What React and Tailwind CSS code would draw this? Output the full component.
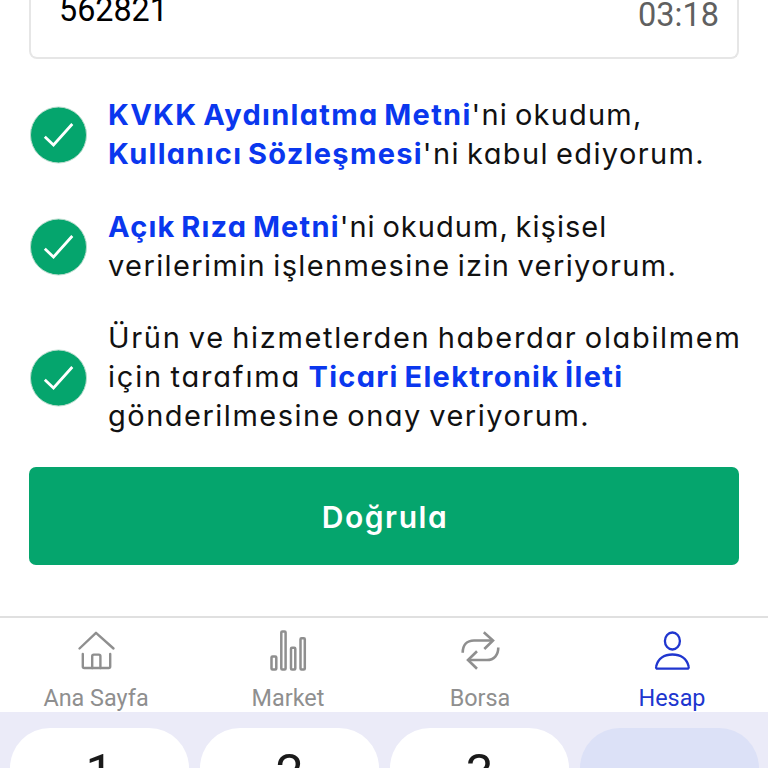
const consents = [
  [
    [
      { text: 'KVKK Aydınlatma Metni', link: true, className: 'tracking-[1.3px]' },
      { text: "'ni okudum,", className: 'tracking-[1.2px]' },
    ],
    [
      { text: 'Kullanıcı Sözleşmesi', link: true, className: 'tracking-[1.28px]' },
      { text: "'ni kabul ediyorum.", className: 'tracking-[1.38px]' },
    ],
  ],
  [
    [
      { text: 'Açık Rıza Metni', link: true, className: 'tracking-[1.2px]' },
      { text: "'ni okudum, kişisel", className: 'tracking-[1.03px]' },
    ],
    [{ text: 'verilerimin işlenmesine izin veriyorum.', className: 'tracking-[1.38px]' }],
  ],
  [
    [{ text: 'Ürün ve hizmetlerden haberdar olabilmem', className: 'tracking-[1.66px]' }],
    [
      { text: 'için tarafıma ', className: 'tracking-[1.8px]' },
      { text: 'Ticari Elektronik İleti', link: true, className: 'tracking-[1.3px]' },
    ],
    [{ text: 'gönderilmesine onay veriyorum.', className: 'tracking-[1.5px]' }],
  ],
];

function CheckCircle() {
  return (
    <svg viewBox="0 0 58 58" className="h-[58px] w-[58px] shrink-0" fill="none">
      <circle cx="29.5" cy="29" r="28" fill="#05a56d" stroke="#b9dccd" strokeWidth="1" />
      <path d="M15.8 30.8 L24.5 39 L43.3 18" stroke="#fff" strokeWidth="2.8" />
    </svg>
  );
}

function HomeIcon() {
  return (
    <svg viewBox="0 0 40 40" className="h-10 w-10" fill="none" stroke="currentColor" strokeWidth="2.4" strokeLinecap="round" strokeLinejoin="round">
      <path d="M3.5 18.5 L20 2.8 L37.5 18.5" />
      <path d="M6.8 24 V36.5 Q6.8 38 8.3 38 H32.7 Q34.2 38 34.2 36.5 V24" />
      <path d="M16.2 38 V26.2 Q16.2 24.6 17.8 24.6 H22.8 Q24.4 24.6 24.4 26.2 V38" />
    </svg>
  );
}

function MarketIcon() {
  return (
    <svg viewBox="0 0 40 40" className="h-10 w-10 overflow-visible" fill="none" stroke="currentColor" strokeWidth="2.5">
      <rect x="3.5" y="26.5" width="4.8" height="13" rx="1" />
      <rect x="13.3" y="1.5" width="4.3" height="38" rx="1" />
      <rect x="23" y="17.7" width="4.3" height="21.8" rx="1" />
      <rect x="32.5" y="8.3" width="4.3" height="31.2" rx="1" />
    </svg>
  );
}

function SwapIcon() {
  return (
    <svg viewBox="0 0 40 40" className="h-10 w-10" fill="none" stroke="currentColor" strokeWidth="2.6">
      <path d="M2.7 22.8 C2.7 15 7 10.5 14 10.5 H33" />
      <path d="M23.8 2.3 L33 10.5 L24.3 19" />
      <path d="M38.3 17.5 C38.3 25 34 30 27 30 H8" />
      <path d="M17 21.3 L8 30 L17 38.7" />
    </svg>
  );
}

function AccountIcon() {
  return (
    <svg viewBox="0 0 40 40" className="h-10 w-10" fill="none" stroke="currentColor" strokeWidth="2.3" strokeLinejoin="round">
      <ellipse cx="20.4" cy="11" rx="7.5" ry="8.5" />
      <path d="M5.7 38.7 H35 C36.5 38.7 37 37.8 36.6 36.3 C34.8 28.5 28.5 24.5 20.4 24.5 C12.3 24.5 6 28.5 4.2 36.3 C3.8 37.8 4.3 38.7 5.7 38.7 Z" />
    </svg>
  );
}

const tabs = [
  { label: 'Ana Sayfa', Icon: HomeIcon },
  { label: 'Market', Icon: MarketIcon },
  { label: 'Borsa', Icon: SwapIcon },
  { label: 'Hesap', Icon: AccountIcon, active: true },
];

export default function App() {
  return (
    <div className="flex h-[768px] w-[768px] flex-col overflow-hidden bg-white font-['Roboto',sans-serif]">
      <main className="flex h-[616px] shrink-0 flex-col px-[29px]">
        <div className="flex h-[59px] shrink-0 justify-between rounded-b-lg border-2 border-t-0 border-[#e6e6e6] pr-[18px] pl-[28px]">
          <span className="-mt-[12px] text-[32.3px] leading-[44px] text-black">562821</span>
          <span className="-mt-[7px] text-[32.5px] leading-[44px] text-[#606060]">03:18</span>
        </div>

        <div className="mt-[37px] flex flex-col gap-[33.5px]">
          {consents.map((lines, i) => (
            <label key={i} className="flex items-center gap-[21px]">
              <CheckCircle />
              <span className="-translate-y-px font-['Inter',sans-serif] text-[29px] leading-[39px] [word-spacing:-2.4px] whitespace-pre text-[#111] [font-feature-settings:'cv11']">
                {lines.map((parts, j) => (
                  <span key={j} className="block">
                    {parts.map(part => (
                      <span key={part.text} className={`${part.className} ${part.link ? 'font-bold text-[#0a37ee]' : ''}`}>{part.text}</span>
                    ))}
                  </span>
                ))}
              </span>
            </label>
          ))}
        </div>

        <button className="mt-[31px] h-[98px] shrink-0 rounded-[7px] bg-[#05a56d] pt-[2px] pl-[2px] font-['Inter',sans-serif] text-[30px] font-semibold tracking-[1.6px] text-white [font-feature-settings:'cv11']">
          Doğrula
        </button>
      </main>

      <nav className="grid h-[96px] shrink-0 grid-cols-4 border-t-2 border-[#e0e0e0] bg-white">
        {tabs.map(({ label, Icon, active }) => (
          <div key={label} className={`flex flex-col items-center pt-[12px] ${active ? 'text-[#2036cf]' : 'text-[#8f8f8f]'}`}>
            <Icon />
            <span className="mt-[12px] text-[23.4px] leading-[32px]">{label}</span>
          </div>
        ))}
      </nav>

      {/* top edge of the numeric keyboard */}
      <div className="grid h-[56px] shrink-0 grid-cols-4 gap-[11px] bg-[#ebebf8] pt-4 pr-[9px] pl-[10px]">
        {['1', '2', '3'].map(key => (
          <div key={key} className="h-[90px] rounded-[40px] bg-white pt-[15px] text-center text-[50px] leading-[60px] text-[#1a1a1a]">{key}</div>
        ))}
        <div className="h-[90px] rounded-[40px] bg-[#dce1f7]" />
      </div>
    </div>
  );
}
